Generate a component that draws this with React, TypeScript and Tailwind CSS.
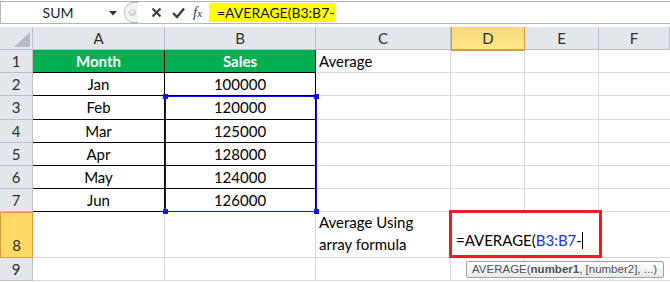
import React from 'react';

const cols = ['A', 'B', 'C', 'D', 'E', 'F'];

const data = [
  ['Month', 'Sales'],
  ['Jan', '100000'],
  ['Feb', '120000'],
  ['Mar', '125000'],
  ['Apr', '128000'],
  ['May', '124000'],
  ['Jun', '126000'],
];

const rowHeights = ['h-[23px]', 'h-[23px]', 'h-[24px]', 'h-[23px]', 'h-[23px]', 'h-[23px]', 'h-[23px]', 'h-[46px]', 'h-[23px]'];

const cellFont = { fontFamily: 'Lato, "Open Sans", sans-serif' };

function Corner() {
  return (
    <div className="h-[23px] bg-[#e3e6ea] border-r border-b border-[#bcc0c6] flex items-end justify-end pr-[2px] pb-[2px]">
      <svg width="16" height="15" viewBox="0 0 16 15">
        <path d="M0 15 L16 0 L16 15 Z" fill="#b6bbc2" />
      </svg>
    </div>
  );
}

function ColHeader({ label }: { label: string }) {
  const active = label === 'D';
  return (
    <div
      className={`h-[23px] flex items-center justify-center text-[15px] text-[#2f2f2f] border-b ${
        active
          ? 'bg-gradient-to-b from-[#f9d580] to-[#ffe886] border-[#d99b3c] border-x'
          : 'bg-[#e3e6ea] border-r border-[#bcc0c6]'
      }`}
      style={cellFont}
    >
      {label}
    </div>
  );
}

function RowHeader({ n, h }: { n: number; h: string }) {
  const active = n === 8;
  return (
    <div
      className={`${h} flex justify-center text-[15px] text-[#2f2f2f] ${
        active
          ? 'bg-[#ffd966] border border-[#d99b3c] items-end pb-[1px]'
          : 'bg-[#e3e6ea] border-r border-b border-[#bcc0c6] items-center'
      }`}
      style={cellFont}
    >
      {n}
    </div>
  );
}

export default function App() {
  return (
    <div className="relative w-[670px] h-[282px] overflow-hidden bg-white text-black">
      {/* formula bar */}
      <div className="mt-[1px] h-[23px] border-y border-[#b4b4b4] flex items-stretch">
        <div className="w-[123px] flex items-center bg-white border-l border-[#b4b4b4]">
          <span className="flex-1 text-center text-[14px] pl-[6px] text-[#1f1f1f]" style={cellFont}>
            SUM
          </span>
          <svg width="8" height="5" viewBox="0 0 8 5" className="mr-[6px] mt-[1px]">
            <path d="M0 0 H8 L4 4.5 Z" fill="#333" />
          </svg>
        </div>
        <div className="w-[86px] flex items-center">
          <svg width="16" height="21" viewBox="0 0 16 21" className="ml-[1px]">
            <path d="M14 0.5 H9 A8.5 10 0 0 0 9 20.5 H14" fill="#f3f3f3" stroke="#b8b8b8" />
            <circle cx="8.5" cy="10.5" r="3.6" fill="#d0d0d0" />
            <circle cx="8" cy="9.6" r="2" fill="#ececec" />
          </svg>
          <svg width="11" height="11" viewBox="0 0 11 11" className="ml-[11px]">
            <path d="M1.5 1.5 L9.5 9.5 M9.5 1.5 L1.5 9.5" stroke="#3a3a3a" strokeWidth="2" />
          </svg>
          <svg width="13" height="12" viewBox="0 0 13 12" className="ml-[10px]">
            <path d="M1 6 L5 10 L12 1.5" stroke="#3a3a3a" strokeWidth="2.4" fill="none" />
          </svg>
          <span
            className="ml-[8px] italic text-[15px] text-[#3a3a3a] leading-none"
            style={{ fontFamily: '"Liberation Serif", serif' }}
          >
            f<span className="text-[11px]">x</span>
          </span>
        </div>
        <div className="w-[126px] my-[1px] bg-[#ffff00] flex items-center pl-[8px] text-[14px] text-[#111]" style={cellFont}>
          =AVERAGE(B3:B7-
        </div>
        <div className="flex-1 bg-white" />
      </div>

      {/* sheet */}
      <div className="mt-[3px] grid grid-cols-[33px_132px_151px_135px_74px_74px_71px]">
        <Corner />
        {cols.map((c) => (
          <ColHeader key={c} label={c} />
        ))}
        {rowHeights.map((h, i) => {
          const n = i + 1;
          const row = data[i];
          return (
            <React.Fragment key={n}>
              <RowHeader n={n} h={h} />
              {row ? (
                <>
                  <div
                    className={`${h} flex items-center justify-center text-[15px] border-r border-b border-black ${
                      n === 1 ? 'bg-[#00b050] text-white font-bold' : ''
                    }`}
                    style={cellFont}
                  >
                    {row[0]}
                  </div>
                  <div
                    className={`${h} flex items-center justify-center text-[15px] border-r border-b border-black ${
                      n === 1 ? 'bg-[#00b050] text-white font-bold' : ''
                    }`}
                    style={cellFont}
                  >
                    {row[1]}
                  </div>
                </>
              ) : (
                <>
                  <div className={`${h} border-r border-b border-[#d9d9d9]`} />
                  <div className={`${h} border-r border-b border-[#d9d9d9]`} />
                </>
              )}
              <div
                className={`${h} border-r border-b border-[#d9d9d9] flex text-[15px] pl-[3px] ${
                  n === 8 ? 'flex-col justify-end leading-[22px] pb-[2px]' : 'items-center'
                }`}
                style={cellFont}
              >
                {n === 1 && 'Average'}
                {n === 8 && (
                  <>
                    <span>Average Using</span>
                    <span>array formula</span>
                  </>
                )}
              </div>
              <div
                className={`${h} border-r border-b border-[#d9d9d9] ${n === 1 ? 'border-t border-t-[#d99b3c]' : ''}`}
              />
              <div className={`${h} border-r border-b border-[#d9d9d9]`} />
              <div className={`${h} border-b border-[#d9d9d9]`} />
            </React.Fragment>
          );
        })}
      </div>

      {/* reference selection B3:B7 */}
      <div className="absolute left-[165px] top-[96px] w-[152px] h-[116px] border border-[#1010ff]">
        <span className="absolute -left-[3px] -top-[3px] w-[5px] h-[5px] bg-[#1010ff]" />
        <span className="absolute -right-[3px] -top-[3px] w-[5px] h-[5px] bg-[#1010ff]" />
        <span className="absolute -left-[3px] -bottom-[3px] w-[5px] h-[5px] bg-[#1010ff]" />
        <span className="absolute -right-[3px] -bottom-[3px] w-[5px] h-[5px] bg-[#1010ff]" />
      </div>

      {/* edited cell D8 */}
      <div
        className="absolute left-[449px] top-[210px] w-[153px] h-[48px] border-[3px] border-[#ec1c24] flex items-end pb-[4px] pl-[4px] text-[15px] bg-white"
        style={cellFont}
      >
        <span>=AVERAGE(</span>
        <span className="text-[#2331ee]">B3:B7</span>
        <span>-</span>
        <span className="w-px h-[17px] bg-black mb-[2px]" />
      </div>

      {/* function tooltip */}
      <div
        className="absolute left-[466px] top-[261px] w-[198px] h-[17px] border border-[#a0a0a0] rounded-[2px] bg-gradient-to-b from-[#ffffff] to-[#e9e9ee] flex items-center pl-[5px] text-[11.5px] text-[#505050] leading-none whitespace-nowrap"
        style={{ fontFamily: '"Liberation Sans", Arial, sans-serif' }}
      >
        AVERAGE(<b className="font-bold">number1</b>, [number2], ...)
      </div>
    </div>
  );
}
